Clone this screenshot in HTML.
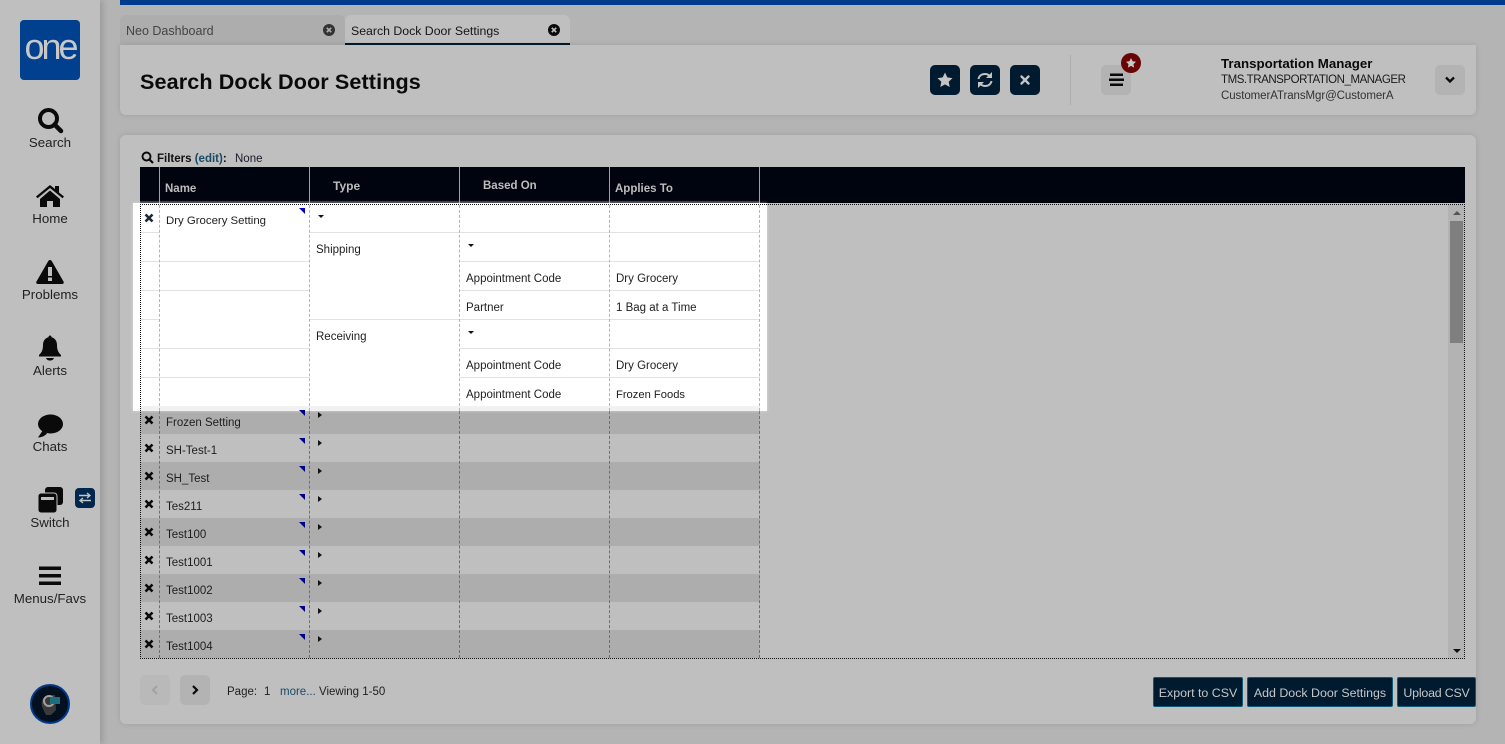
<!DOCTYPE html>
<html><head><meta charset="utf-8"><title>Search Dock Door Settings</title>
<style>
html,body{margin:0;padding:0;width:1505px;height:744px;overflow:hidden;background:#b4b4b4;font-family:"Liberation Sans",sans-serif;color:#111}
div,span,svg{position:absolute;box-sizing:border-box}
.t{white-space:nowrap;line-height:14px;font-size:11.5px;color:#1e1e1e;margin-top:1px}
.nav{left:0;width:100px;text-align:center;font-size:13.3px;color:#222;line-height:16px;white-space:nowrap;margin-top:1px}
.panel{background:#bfbfbf;border-radius:6px;box-shadow:0 0 6px rgba(0,0,0,.12)}
.ib{width:30px;height:30px;background:#001a30;border-radius:5px}
.gb{background:#b3b3b3;border-radius:5px}
.btn{top:677px;height:30px;background:#001a30;border:1px solid #0a5a78;border-radius:2px;color:#c6c6c6;font-size:12.4px;line-height:30px;text-align:center;white-space:nowrap}
.th{color:#bdbdbd;font-weight:bold;font-size:11.5px;line-height:14px;white-space:nowrap;margin-top:1px}
.v{width:0;border-left:1px dashed #b5b5b5;top:205px;height:453px}
.v2{width:0;border-left:1px dashed #6f6f6f;top:406px;height:252px}
.hl{height:1px;background:#e2e2e2}
.tri{width:0;height:0;border-left:6px solid transparent;border-top:6px solid #00008b;left:299px}
.ar{left:318px;width:0;height:0;border-top:3px solid transparent;border-bottom:3px solid transparent;border-left:4px solid #111}
.dn{width:0;height:0;border-left:3px solid transparent;border-right:3px solid transparent;border-top:3px solid #111}
svg.xi{margin-top:-1px}
</style></head><body>
<!-- top bar -->
<div style="left:120px;top:0;width:1385px;height:5px;background:#003a8c"></div>
<!-- sidebar -->
<div style="left:0;top:0;width:100px;height:744px;background:#bfbfbf;box-shadow:3px 0 6px rgba(0,0,0,.14)"></div>
<div style="left:20px;top:20px;width:60px;height:60px;background:#00408f;border-radius:4px"></div>
<div style="left:20px;top:29px;width:60px;text-align:center;color:#c8c8c8;font-size:36px;line-height:36px;letter-spacing:-3px">one</div>

<svg style="left:37px;top:107px" width="27" height="27" viewBox="0 0 27 27"><circle cx="11.5" cy="11.5" r="8.5" fill="none" stroke="#0a0a0a" stroke-width="4"/><path d="M17.5 17.5L24 24" stroke="#0a0a0a" stroke-width="4.5" stroke-linecap="round"/></svg>
<div class="nav" style="top:134px">Search</div>
<svg style="left:36px;top:184px" width="28" height="24" viewBox="0 0 28 24"><path d="M0 12.5L14 1l5 4V2h4v6.5l5 4-1.5 1.8L14 4 1.500 14.300z" fill="#0a0a0a"/><path d="M4 15L14 6.500 24 15v8h-7v-6h-6v6H4z" fill="#0a0a0a"/></svg>
<div class="nav" style="top:210px">Home</div>
<svg style="left:36px;top:259px" width="28" height="26" viewBox="0 0 28 26"><path d="M14 1c1 0 1.500.5 2 1.500l11.500 20c.7 1.300 0 2.500-1.500 2.500H2c-1.500 0-2.200-1.200-1.500-2.500L12 2.500C12.500 1.500 13 1 14 1z" fill="#0a0a0a"/><rect x="12" y="8" width="4" height="9" fill="#bfbfbf"/><rect x="12" y="18.500" width="4" height="3.500" fill="#bfbfbf"/></svg>
<div class="nav" style="top:286px">Problems</div>
<svg style="left:38px;top:335px" width="24" height="26" viewBox="0 0 24 26"><path d="M12 0.500c1 0 1.500.7 1.500 1.700C17 3 19 6 19 10c0 6 2 8 4 10v1.500H1V20c2-2 4-4 4-10 0-4 2-7 5.500-7.800 0-1 .5-1.700 1.500-1.700z" fill="#0a0a0a"/><path d="M8 23h8c-.5 1.500-2 2.500-4 2.500S8.500 24.500 8 23z" fill="#0a0a0a"/></svg>
<div class="nav" style="top:362px">Alerts</div>
<svg style="left:37px;top:414px" width="26" height="24" viewBox="0 0 26 24"><ellipse cx="13.500" cy="10" rx="12.500" ry="9.500" fill="#0a0a0a"/><path d="M6 16L1 23.500c3 0 7-1.500 9-4z" fill="#0a0a0a"/></svg>
<div class="nav" style="top:438px">Chats</div>
<svg style="left:38px;top:487px" width="26" height="26" viewBox="0 0 26 26"><rect x="7" y="0" width="18" height="18" rx="3" fill="#0a0a0a"/><rect x="0" y="6" width="19" height="20" rx="3" fill="#0a0a0a" stroke="#bfbfbf" stroke-width="1"/><rect x="3" y="10" width="13" height="3" fill="#bfbfbf"/></svg>
<div class="nav" style="top:514px">Switch</div>
<div style="left:75px;top:488px;width:20px;height:20px;background:#00274d;border-radius:4px"></div>
<svg style="left:78px;top:492px" width="14" height="12" viewBox="0 0 14 12"><path d="M1 3.500h10M9 1l3 2.500L9 6M13 8.500H3M5 6L2 8.500 5 11" fill="none" stroke="#c4c4c4" stroke-width="1.400"/></svg>
<svg style="left:39px;top:566px" width="22" height="20" viewBox="0 0 22 20"><rect width="22" height="3.500" y="0.500" fill="#0a0a0a"/><rect width="22" height="3.500" y="8" fill="#0a0a0a"/><rect width="22" height="3.500" y="15.500" fill="#0a0a0a"/></svg>
<div class="nav" style="top:590px">Menus/Favs</div>
<svg style="left:30px;top:684px" width="40" height="40" viewBox="0 0 40 40"><circle cx="20" cy="20" r="19" fill="#03101f" stroke="#003a8c" stroke-width="2"/><path d="M13 25c-3-6-1-13 6-14h6l1 15-5 5h-5z" fill="#3a3a3a"/><circle cx="19" cy="17" r="5" fill="none" stroke="#a0a0a0" stroke-width="2"/><rect x="20" y="13" width="10" height="7" fill="#1d6f80"/></svg>

<!-- tabs -->
<div style="left:120px;top:15px;width:225px;height:30px;background:#adadad;border-radius:6px 6px 0 0"></div>
<div class="t" style="left:126px;top:23px;font-size:12.5px;color:#444">Neo Dashboard</div>
<svg style="left:323px;top:24px" width="12" height="12" viewBox="0 0 12 12"><circle cx="6" cy="6" r="6" fill="#333"/><path d="M3.800 3.800l4.400 4.400M8.200 3.800L3.800 8.200" stroke="#adadad" stroke-width="1.700"/></svg>
<div style="left:345px;top:15px;width:225px;height:30px;background:#bfbfbf;border-radius:6px 6px 0 0;border-bottom:2px solid #001a30"></div>
<div class="t" style="left:351px;top:23px;font-size:12.3px;color:#151515">Search Dock Door Settings</div>
<svg style="left:548px;top:24px" width="12" height="12" viewBox="0 0 12 12"><circle cx="6" cy="6" r="6" fill="#0a0a0a"/><path d="M3.800 3.800l4.400 4.400M8.200 3.800L3.800 8.200" stroke="#bfbfbf" stroke-width="1.700"/></svg>

<!-- header panel -->
<div class="panel" style="left:120px;top:45px;width:1356px;height:70px;border-radius:0 0 6px 6px"></div>
<div style="left:140px;top:68px;font-size:21.6px;font-weight:bold;line-height:28px;color:#0a0a0a;white-space:nowrap;letter-spacing:.1px">Search Dock Door Settings</div>
<div class="ib" style="left:930px;top:65px"></div>
<svg style="left:936px;top:71px" width="18" height="18" viewBox="0 0 18 18"><path d="M9 1.500l2.300 4.900 5.200.7-3.800 3.600 1 5.300L9 13.400l-4.700 2.600 1-5.300L1.500 7.100l5.200-.7z" fill="#c4c4c4"/></svg>
<div class="ib" style="left:970px;top:65px"></div>
<svg style="left:976px;top:71px" width="18" height="18" viewBox="0 0 18 18"><path d="M2.500 8C3 5 5.500 3 9 3c2.200 0 3.800 1 4.800 2.300" fill="none" stroke="#c4c4c4" stroke-width="2"/><path d="M16 1v6h-6z" fill="#c4c4c4"/><path d="M15.500 10c-.5 3-3 5-6.500 5-2.200 0-3.800-1-4.800-2.300" fill="none" stroke="#c4c4c4" stroke-width="2"/><path d="M2 17v-6h6z" fill="#c4c4c4"/></svg>
<div class="ib" style="left:1010px;top:65px"></div>
<svg style="left:1019px;top:74px" width="12" height="12" viewBox="0 0 12 12"><path d="M2.500 2.500l7 7M9.500 2.500l-7 7" stroke="#c4c4c4" stroke-width="2.400" stroke-linecap="round"/></svg>
<div style="left:1070px;top:55px;width:1px;height:50px;background:#aeaeae"></div>
<div class="gb" style="left:1101px;top:65px;width:30px;height:30px"></div>
<svg style="left:1109px;top:73px" width="15" height="14" viewBox="0 0 15 14"><rect x="1" y="0.500" width="13" height="2.500" fill="#0a0a0a"/><rect y="5.500" width="15" height="2.500" fill="#0a0a0a"/><rect x="1" y="10.500" width="13" height="2.500" fill="#0a0a0a"/></svg>
<div style="left:1121px;top:53px;width:20px;height:20px;border-radius:50%;background:#6b0505"></div>
<svg style="left:1125px;top:57px" width="12" height="12" viewBox="0 0 18 18"><path d="M9 1.500l2.300 4.900 5.200.7-3.800 3.600 1 5.300L9 13.400l-4.700 2.600 1-5.300L1.500 7.100l5.200-.7z" fill="#c8c8c8"/></svg>
<div class="t" style="left:1221px;top:56px;font-size:13.300px;font-weight:bold;color:#0a0a0a">Transportation Manager</div>
<div class="t" style="left:1221px;top:72px;font-size:11.500px;color:#1a1a1a;letter-spacing:-.45px">TMS.TRANSPORTATION_MANAGER</div>
<div class="t" style="left:1221px;top:88px;font-size:11.500px;color:#333;letter-spacing:-.08px">CustomerATransMgr@CustomerA</div>
<div class="gb" style="left:1435px;top:65px;width:30px;height:30px"></div>
<svg style="left:1444px;top:76px" width="12" height="8" viewBox="0 0 12 8"><path d="M2 1.500l4 4 4-4" fill="none" stroke="#0a0a0a" stroke-width="2.300"/></svg>

<!-- main panel -->
<div class="panel" style="left:120px;top:135px;width:1356px;height:589px"></div>
<svg style="left:141px;top:151px" width="13" height="13" viewBox="0 0 13 13"><circle cx="5.500" cy="5.500" r="4" fill="none" stroke="#0a0a0a" stroke-width="1.900"/><path d="M8.500 8.500l3.500 3.500" stroke="#0a0a0a" stroke-width="2.200"/></svg>
<div class="t" style="left:157px;top:151px;font-size:11.500px;font-weight:bold;color:#111">Filters <span style="position:static;color:#1a4a66">(edit)</span>:</div>
<div class="t" style="left:235px;top:151px;font-size:11.500px;color:#1a1a2a">None</div>

<!-- grid head -->
<div style="left:140px;top:167px;width:1325px;height:36px;background:#00040f"></div>
<div style="left:140px;top:201px;width:620px;height:2px;background:#2a2e38"></div>
<div style="left:159px;top:167px;width:1px;height:36px;background:#a0a0a0"></div>
<div style="left:309px;top:167px;width:1px;height:36px;background:#a0a0a0"></div>
<div style="left:459px;top:167px;width:1px;height:36px;background:#a0a0a0"></div>
<div style="left:609px;top:167px;width:1px;height:36px;background:#a0a0a0"></div>
<div style="left:759px;top:167px;width:1px;height:36px;background:#a0a0a0"></div>
<div class="th" style="left:165px;top:181px">Name</div>
<div class="th" style="left:333px;top:178px;font-size:12px">Type</div>
<div class="th" style="left:483px;top:178px">Based On</div>
<div class="th" style="left:615px;top:181px">Applies To</div>

<!-- grid dark rows -->
<div style="left:140px;top:406px;width:620px;height:28px;background:#adadad"></div>
<div style="left:140px;top:462px;width:620px;height:28px;background:#adadad"></div>
<div style="left:140px;top:518px;width:620px;height:28px;background:#adadad"></div>
<div style="left:140px;top:574px;width:620px;height:28px;background:#adadad"></div>
<div style="left:140px;top:630px;width:620px;height:28px;background:#adadad"></div>
<div class="v2" style="left:159px"></div><div class="v2" style="left:309px"></div><div class="v2" style="left:459px"></div><div class="v2" style="left:609px"></div><div class="v2" style="left:759px"></div>

<!-- white highlighted -->
<div style="left:133px;top:203px;width:634px;height:208px;background:#fff;box-shadow:0 0 3px rgba(255,255,255,.5)"></div>
<div style="left:140px;top:406px;width:620px;height:5px;background:#f1f1f1"></div>
<div class="hl" style="left:140px;top:232px;width:20px"></div>
<div class="hl" style="left:310px;top:232px;width:450px"></div>
<div class="hl" style="left:140px;top:261px;width:170px"></div>
<div class="hl" style="left:460px;top:261px;width:300px"></div>
<div class="hl" style="left:140px;top:290px;width:170px"></div>
<div class="hl" style="left:460px;top:290px;width:300px"></div>
<div class="hl" style="left:140px;top:319px;width:20px"></div>
<div class="hl" style="left:310px;top:319px;width:450px"></div>
<div class="hl" style="left:140px;top:348px;width:170px"></div>
<div class="hl" style="left:460px;top:348px;width:300px"></div>
<div class="hl" style="left:140px;top:377px;width:170px"></div>
<div class="hl" style="left:460px;top:377px;width:300px"></div>
<div class="v" style="left:159px;height:206px"></div><div class="v" style="left:309px;height:206px"></div><div class="v" style="left:459px;height:206px"></div><div class="v" style="left:609px;height:206px"></div><div class="v" style="left:759px;height:206px"></div>
<div style="left:140px;top:204px;width:1325px;height:0;border-top:1px dotted #111"></div>
<div style="left:140px;top:204px;width:0;height:455px;border-left:1px dotted #111"></div>
<div style="left:140px;top:658px;width:1325px;height:0;border-top:1px dotted #111"></div>
<div style="left:1464px;top:204px;width:0;height:455px;border-left:1px dotted #111"></div>

<!-- scrollbar -->
<div style="left:1448px;top:205px;width:16px;height:453px;background:#b3b3b3"></div>
<div style="left:1450px;top:221px;width:13px;height:122px;background:#7f7f7f"></div>
<div style="left:1453px;top:211px;width:0;height:0;border-left:4px solid transparent;border-right:4px solid transparent;border-bottom:4px solid #555"></div>
<div style="left:1453px;top:649px;width:0;height:0;border-left:4px solid transparent;border-right:4px solid transparent;border-top:4px solid #111"></div>

<!-- row content: expanded -->
<svg class="xi" style="left:144px;top:214px" width="10" height="10" viewBox="0 0 10 10"><path d="M1.500 1.500l7 7M8.500 1.500l-7 7" stroke="#1c2a38" stroke-width="2.600"/></svg>
<div class="t" style="left:166px;top:213px;font-size:11.400px">Dry Grocery Setting</div>
<div class="tri" style="top:208px;border-top-color:#0000c0"></div>
<div class="dn" style="left:318px;top:215px"></div>
<div class="t" style="left:316px;top:242px">Shipping</div>
<div class="dn" style="left:468px;top:244px"></div>
<div class="t" style="left:466px;top:271px">Appointment Code</div>
<div class="t" style="left:616px;top:271px">Dry Grocery</div>
<div class="t" style="left:466px;top:300px">Partner</div>
<div class="t" style="left:616px;top:300px">1 Bag at a Time</div>
<div class="t" style="left:316px;top:329px">Receiving</div>
<div class="dn" style="left:468px;top:331px"></div>
<div class="t" style="left:466px;top:358px">Appointment Code</div>
<div class="t" style="left:616px;top:358px">Dry Grocery</div>
<div class="t" style="left:466px;top:387px">Appointment Code</div>
<div class="t" style="left:616px;top:387px;font-size:11.200px">Frozen Foods</div>

<!-- collapsed rows -->
<svg class="xi" style="left:144px;top:416px" width="10" height="10" viewBox="0 0 10 10"><path d="M1.500 1.500l7 7M8.500 1.500l-7 7" stroke="#0a0a0a" stroke-width="2.600"/></svg>
<div class="t" style="left:166px;top:415px">Frozen Setting</div><div class="tri" style="top:410px"></div><div class="ar" style="top:412px"></div>
<svg class="xi" style="left:144px;top:444px" width="10" height="10" viewBox="0 0 10 10"><path d="M1.500 1.500l7 7M8.500 1.500l-7 7" stroke="#0a0a0a" stroke-width="2.600"/></svg>
<div class="t" style="left:166px;top:443px">SH-Test-1</div><div class="tri" style="top:438px"></div><div class="ar" style="top:440px"></div>
<svg class="xi" style="left:144px;top:472px" width="10" height="10" viewBox="0 0 10 10"><path d="M1.500 1.500l7 7M8.500 1.500l-7 7" stroke="#0a0a0a" stroke-width="2.600"/></svg>
<div class="t" style="left:166px;top:471px">SH_Test</div><div class="tri" style="top:466px"></div><div class="ar" style="top:468px"></div>
<svg class="xi" style="left:144px;top:500px" width="10" height="10" viewBox="0 0 10 10"><path d="M1.500 1.500l7 7M8.500 1.500l-7 7" stroke="#0a0a0a" stroke-width="2.600"/></svg>
<div class="t" style="left:166px;top:499px">Tes211</div><div class="tri" style="top:494px"></div><div class="ar" style="top:496px"></div>
<svg class="xi" style="left:144px;top:528px" width="10" height="10" viewBox="0 0 10 10"><path d="M1.500 1.500l7 7M8.500 1.500l-7 7" stroke="#0a0a0a" stroke-width="2.600"/></svg>
<div class="t" style="left:166px;top:527px">Test100</div><div class="tri" style="top:522px"></div><div class="ar" style="top:524px"></div>
<svg class="xi" style="left:144px;top:556px" width="10" height="10" viewBox="0 0 10 10"><path d="M1.500 1.500l7 7M8.500 1.500l-7 7" stroke="#0a0a0a" stroke-width="2.600"/></svg>
<div class="t" style="left:166px;top:555px">Test1001</div><div class="tri" style="top:550px"></div><div class="ar" style="top:552px"></div>
<svg class="xi" style="left:144px;top:584px" width="10" height="10" viewBox="0 0 10 10"><path d="M1.500 1.500l7 7M8.500 1.500l-7 7" stroke="#0a0a0a" stroke-width="2.600"/></svg>
<div class="t" style="left:166px;top:583px">Test1002</div><div class="tri" style="top:578px"></div><div class="ar" style="top:580px"></div>
<svg class="xi" style="left:144px;top:612px" width="10" height="10" viewBox="0 0 10 10"><path d="M1.500 1.500l7 7M8.500 1.500l-7 7" stroke="#0a0a0a" stroke-width="2.600"/></svg>
<div class="t" style="left:166px;top:611px">Test1003</div><div class="tri" style="top:606px"></div><div class="ar" style="top:608px"></div>
<svg class="xi" style="left:144px;top:640px" width="10" height="10" viewBox="0 0 10 10"><path d="M1.500 1.500l7 7M8.500 1.500l-7 7" stroke="#0a0a0a" stroke-width="2.600"/></svg>
<div class="t" style="left:166px;top:639px">Test1004</div><div class="tri" style="top:634px"></div><div class="ar" style="top:636px"></div>

<!-- pagination -->
<div class="gb" style="left:140px;top:675px;width:30px;height:30px;background:#b9b9b9"></div>
<svg style="left:151px;top:685px" width="8" height="10" viewBox="0 0 8 10"><path d="M6 1L2 5l4 4" fill="none" stroke="#a3a3a3" stroke-width="2.200"/></svg>
<div class="gb" style="left:180px;top:675px;width:30px;height:30px"></div>
<svg style="left:191px;top:685px" width="8" height="10" viewBox="0 0 8 10"><path d="M2 1l4 4-4 4" fill="none" stroke="#0a0a0a" stroke-width="2.200"/></svg>
<div class="t" style="left:227px;top:684px">Page:</div>
<div class="t" style="left:264px;top:684px">1</div>
<div class="t" style="left:280px;top:684px;color:#1a4a66">more...</div>
<div class="t" style="left:319px;top:684px">Viewing 1-50</div>

<!-- buttons -->
<div class="btn" style="left:1153px;width:90px">Export to CSV</div>
<div class="btn" style="left:1247px;width:146px">Add Dock Door Settings</div>
<div class="btn" style="left:1397px;width:79px;letter-spacing:-.2px">Upload CSV</div>
</body></html>
